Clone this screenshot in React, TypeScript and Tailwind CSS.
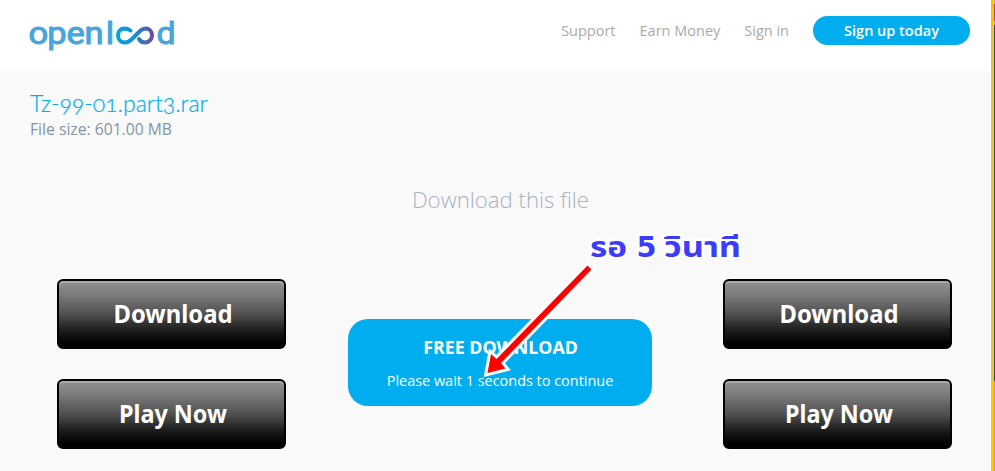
import React from "react";

const sans = "font-['Open_Sans','Noto_Sans',sans-serif]";

function Logo() {
  return (
    <svg width="154" height="48" viewBox="-2 -6 154 48" overflow="visible" aria-label="openload">
      <defs>
        <linearGradient id="loop" gradientUnits="userSpaceOnUse" x1="87" y1="0" x2="125" y2="0">
          <stop offset="0" stopColor="#00a3e0" />
          <stop offset="0.45" stopColor="#1593d2" />
          <stop offset="1" stopColor="#6f479b" />
        </linearGradient>
      </defs>
      <g
        fill="#46a5dc"
        stroke="#46a5dc"
        strokeWidth="1"
        strokeLinejoin="round"
        fontFamily="Roboto, sans-serif"
        fontSize="32"
        fontWeight="400"
      >
        <text transform="scale(1.08 1)" x="-0.500 16.900 34.800 51.500 71" y="27">openl</text>
        <text transform="scale(1.06 1)" x="120.300" y="27">d</text>
      </g>
      <path
        d="M101.500 13.500C99.500 12 97.500 11.500 95 11.500C91 11.700 89 14.700 89 18.500C89 22.500 92 25.500 96 25.500C99.500 25.500 101.500 23.500 103 22L110.500 14.500C112.500 12.500 114 11.500 117 11.500C120.500 11.700 123 14.500 123 18.500C123 22.300 120 25.500 116 25.500C113 25.500 111 24 110 22"
        fill="none"
        stroke="url(#loop)"
        strokeWidth="4"
        strokeLinecap="round"
      />
    </svg>
  );
}

function AdButton({ label, width }: { label: string; width: number }) {
  return (
    <button className="flex h-[70px] w-[229px] items-center justify-center rounded-[6px] border-2 border-black bg-[linear-gradient(#929292_0%,#7c7c7c_20%,#505050_50%,#1c1c1c_75%,#000_95%)] shadow-[inset_0_2px_0_#aaa]">
      <svg width="180" height="44" viewBox="0 0 180 44">
        <text
          x="91"
          y="30.500"
          textAnchor="middle"
          textLength={width}
          lengthAdjust="spacingAndGlyphs"
          className="font-['Noto_Sans',sans-serif] text-[25px] font-bold"
          fill="#fff"
        >
          {label}
        </text>
      </svg>
    </button>
  );
}

function AdColumn() {
  return (
    <div className="flex flex-col gap-[30px] pt-[150px]">
      <AdButton label="Download" width={119} />
      <AdButton label="Play Now" width={108} />
    </div>
  );
}

export default function App() {
  return (
    <div className={`relative flex h-[471px] w-[995px] overflow-hidden bg-[#f9f9f9] ${sans}`}>
      <div className="flex w-[991px] flex-col">
        <header className="flex h-[71px] items-start bg-white pr-[21px] pl-[27px]">
          <div className="pt-[11px]"><Logo /></div>
          <nav className="ml-auto flex items-center gap-6 pt-4 text-[14.5px] leading-[29px] whitespace-nowrap text-[#aaa]">
            <a>Support</a>
            <a>Earn Money</a>
            <a>Sign in</a>
            <a className="h-[29px] w-[157px] rounded-full bg-[#00aef0] text-center font-semibold text-white">Sign up today</a>
          </nav>
        </header>
        <section className="h-[58px] pt-[18px] pl-[30px]">
          <h1 className="font-[Lato,sans-serif] text-[23px] leading-[29px] font-light text-[#00aef0] [font-feature-settings:'onum'] [-webkit-text-stroke:0.2px_#00aef0]">Tz-99-01.part3.rar</h1>
          <p className="text-[15.7px] leading-[22px] text-[#8494a3]">File size: 601.00 MB</p>
        </section>
        <main className="flex pl-[57px]">
          <AdColumn />
          <div className="mr-[71px] ml-[62px] flex w-[304px] flex-col items-center pt-[55px]">
            <h2 className="pl-px text-[22.2px] leading-8 font-light whitespace-nowrap text-[#a7b3be]">Download this file</h2>
            <div className="mt-[103px] flex h-[87px] w-[304px] flex-col items-center rounded-[20px] bg-[#00aef0] whitespace-nowrap text-white">
              <strong className="mt-[16px] pl-px text-[17.8px] leading-6">FREE DOWNLOAD</strong>
              <span className="mt-[12px] text-[14.45px] leading-5">Please wait 1 seconds to continue</span>
            </div>
          </div>
          <AdColumn />
        </main>
      </div>
      <div className="w-[3px] bg-[#fbc20f]" />
      <div className="flex w-px flex-col">
        <div className="h-[4px] bg-[#f5b800]" />
        <div className="h-[17px] bg-[#c94b16]" />
        <div className="h-[4px] bg-[#f5b800]" />
        <div className="h-[356px] bg-[#075e96]" />
        <div className="grow bg-[#fa9600]" />
      </div>
      <svg className="absolute inset-0" width="995" height="471" viewBox="0 0 995 471">
        <path
          d="M587.500 265.500L591.500 269.500L501 363L505.500 368.500L487.500 373L491 354L496.500 359Z"
          fill="#f00"
          stroke="#fff"
          strokeWidth="6"
          paintOrder="stroke"
        />
        <g
          className="font-['DejaVu_Sans','Noto_Sans_Thai','Noto_Sans',sans-serif] text-[29px] font-bold"
          fill="#3c3cff"
          stroke="#fff"
          strokeWidth="4"
          paintOrder="stroke"
        >
          <text x="590" y="257" textLength="37" lengthAdjust="spacingAndGlyphs">รอ</text>
          <text x="636.500" y="257" textLength="20" lengthAdjust="spacingAndGlyphs">5</text>
          <text x="664" y="257" textLength="77" lengthAdjust="spacingAndGlyphs">วินาที</text>
        </g>
      </svg>
    </div>
  );
}
